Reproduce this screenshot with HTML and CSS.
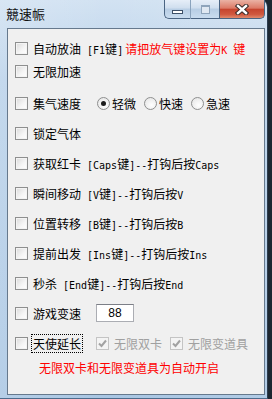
FILE: index.html
```html
<!DOCTYPE html>
<html lang="zh-CN">
<head>
  <meta charset="UTF-8">
  <title>競速帪</title>
  <link rel="stylesheet" href="styles.css">
</head>
<body>
  <div class="window">
    <div class="titlebar">
      <span class="title">競速帪</span>
      <div class="caption">
        <span class="cap min"><i></i></span>
        <span class="cap max"><i></i></span>
        <span class="cap close">
          <svg width="14" height="11" viewBox="0 0 14 11">
            <path d="M3 2 L11 9 M11 2 L3 9" stroke="#3a2a28" stroke-width="4.4" stroke-linecap="square"/>
            <path d="M3 2 L11 9 M11 2 L3 9" stroke="#fff" stroke-width="2.4" stroke-linecap="square"/>
          </svg>
        </span>
      </div>
    </div>

    <div class="client">
      <div class="row">
        <span class="box"></span>
        <span>自动放油<span class="en"> [F1</span>键<span class="en">]</span></span>
        <span class="red hint">请把放气键设置为<span class="en">K </span>键</span>
      </div>
      <div class="row tight">
        <span class="box"></span><span>无限加速</span>
      </div>
      <div class="row loose">
        <span class="box"></span><span>集气速度</span>
        <span class="opt first"><span class="radio on"></span>轻微</span>
        <span class="opt"><span class="radio"></span>快速</span>
        <span class="opt"><span class="radio"></span>急速</span>
      </div>
      <div class="row">
        <span class="box"></span><span>锁定气体</span>
      </div>
      <div class="row">
        <span class="box"></span>
        <span>获取红卡<span class="en"> [Caps</span>键<span class="en">]--</span>打钩后按<span class="en">Caps</span></span>
      </div>
      <div class="row">
        <span class="box"></span>
        <span>瞬间移动<span class="en"> [V</span>键<span class="en">]--</span>打钩后按<span class="en">V</span></span>
      </div>
      <div class="row">
        <span class="box"></span>
        <span>位置转移<span class="en"> [B</span>键<span class="en">]--</span>打钩后按<span class="en">B</span></span>
      </div>
      <div class="row">
        <span class="box"></span>
        <span>提前出发<span class="en"> [Ins</span>键<span class="en">]--</span>打钩后按<span class="en">Ins</span></span>
      </div>
      <div class="row">
        <span class="box"></span>
        <span>秒杀<span class="en"> [End</span>键<span class="en">]--</span>打钩后按<span class="en">End</span></span>
      </div>
      <div class="row">
        <span class="box"></span><span>游戏变速</span>
        <input class="speed" type="text" value="88">
      </div>
      <div class="row">
        <span class="box"></span><span class="focus">天使延长</span>
        <span class="opt off first">
          <span class="box dis">
            <svg width="11" height="11" viewBox="0 0 11 11"><path d="M2 5.5 L4.5 8 L9 2.5" fill="none" stroke="#a2a2a2" stroke-width="2"/></svg>
          </span>无限双卡
        </span>
        <span class="opt off">
          <span class="box dis">
            <svg width="11" height="11" viewBox="0 0 11 11"><path d="M2 5.5 L4.5 8 L9 2.5" fill="none" stroke="#a2a2a2" stroke-width="2"/></svg>
          </span>无限变道具
        </span>
      </div>
      <div class="note red">无限双卡和无限变道具为自动开启</div>
    </div>
  </div>
</body>
</html>
```

FILE: styles.css
```css
body {
  margin: 0;
  width: 272px;
  height: 399px;
  overflow: hidden;
  background: #1d2731;
  font-family: "Noto Sans CJK SC", sans-serif;
  font-size: 12px;
  color: #000;
}

.window {
  width: 268px;
  height: 399px;
  box-sizing: border-box;
  display: flex;
  flex-direction: column;
  padding: 0 2px 3px 7px;
  border-right: 1px solid #2c3d50;
  border-bottom: 1px solid #4d6c8c;
  border-top-right-radius: 7px;
  background: linear-gradient(to right, rgba(255,255,255,0.15), rgba(255,255,255,0) 40%, rgba(255,255,255,0.1)),
              linear-gradient(to bottom, #d2e2f2 0%, #bad2ea 20%, #a9c6e3 100%);
}

/* title bar */
.titlebar {
  height: 28px;
  display: flex;
  align-items: flex-start;
  margin-left: -1px;
}

.title {
  font-family: "Noto Sans CJK TC", sans-serif;
  font-size: 13px;
  line-height: 16px;
  margin-top: 6px;
  color: #111;
}

.caption {
  margin-left: auto;
  display: flex;
}

.cap {
  height: 19px;
  box-sizing: border-box;
  display: flex;
  align-items: center;
  justify-content: center;
  border: 1px solid #4a6482;
  border-top: none;
}

.min, .max {
  background: linear-gradient(to bottom, #e6eef8 0%, #cfdeee 45%, #b7cde4 50%, #c9dcef 100%);
}

.min {
  width: 27px;
  border-right: 1px solid #8aa3bd;
  border-bottom-left-radius: 5px;
}

.min i {
  display: block;
  width: 9px;
  height: 2px;
  margin-top: 5px;
  background: #fff;
  border: 1px solid #3d5068;
}

.max {
  width: 28px;
  border-left: none;
  border-right: none;
}

.max i {
  display: block;
  width: 7px;
  height: 6px;
  border: 1px solid #8ea4bb;
  border-top-width: 2px;
  background: #dfe8f2;
}

.close {
  width: 46px;
  border-bottom-right-radius: 5px;
  background: linear-gradient(to bottom, #eab2a4 0%, #dc7a66 45%, #c6452f 52%, #d0583f 80%, #e08a6d 100%);
}

/* client area */
.client {
  flex: 1;
  background: #f0f0f0;
  border: 1px solid #66798d;
  display: flex;
  flex-direction: column;
  gap: 14px;
  padding: 11px 0 0 7px;
}

.row {
  height: 16px;
  display: flex;
  align-items: center;
  white-space: nowrap;
}

.row.tight {
  margin-top: -7px;
}

.row.loose {
  margin-top: 2px;
}

.en {
  font-family: "DejaVu Sans Mono", monospace;
  font-size: 10px;
}

.box {
  width: 13px;
  height: 13px;
  box-sizing: border-box;
  flex: none;
  margin-right: 5px;
  border: 1px solid #8e8f8f;
  background: linear-gradient(135deg, #dadada, #f6f6f6 60%, #fff);
  box-shadow: inset 0 0 0 1px #f4f4f4;
  display: flex;
  align-items: center;
  justify-content: center;
}

.box.dis {
  border-color: #c4c4c4;
  background: #f4f4f4;
  box-shadow: none;
}

.opt {
  display: flex;
  align-items: center;
  margin-left: 8px;
}

.opt.first {
  margin-left: 16px;
}

.opt.off {
  color: #a0a0a0;
}

.opt.off.first {
  margin-left: 14px;
}

.radio {
  width: 13px;
  height: 13px;
  box-sizing: border-box;
  border-radius: 50%;
  border: 1px solid #8e8f8f;
  background: radial-gradient(circle at 60% 65%, #fff, #e2e2e2);
  margin-right: 2px;
  display: flex;
  align-items: center;
  justify-content: center;
}

.radio.on::after {
  content: "";
  width: 5px;
  height: 5px;
  border-radius: 50%;
  background: #1c1c1c;
}

.speed {
  margin-left: 15px;
  width: 38px;
  height: 18px;
  box-sizing: border-box;
  padding: 0;
  border: 1px solid #abadb3;
  border-top-color: #7c7f87;
  background: #fff;
  text-align: center;
  font-family: "Liberation Sans", sans-serif;
  font-size: 12px;
}

.focus {
  outline: 1px dotted #000;
  padding: 0 1px;
  margin-left: -1px;
}

.red {
  color: #ff0000;
}

.hint {
  margin-left: 2px;
}

.note {
  margin-top: -5px;
  margin-left: 24px;
  line-height: 16px;
}
```
